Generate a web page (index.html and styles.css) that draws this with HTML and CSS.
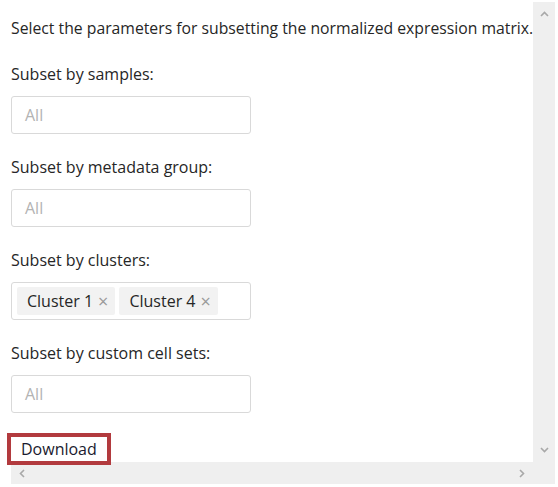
FILE: index.html
```html
<!DOCTYPE html>
<html lang="en">
<head>
    <meta charset="UTF-8">
    <meta name="viewport" content="width=device-width, initial-scale=1.0">
    <title>Subset expression matrix</title>
    <link rel="stylesheet" href="styles.css">
</head>
<body>
    <div class="frame">
        <div class="viewport">
            <p class="intro">Select the parameters for subsetting the normalized expression matrix.</p>

            <div class="field">
                <label class="field-label">Subset by samples:</label>
                <div class="select"><span class="placeholder">All</span></div>
            </div>

            <div class="field">
                <label class="field-label">Subset by metadata group:</label>
                <div class="select"><span class="placeholder">All</span></div>
            </div>

            <div class="field">
                <label class="field-label">Subset by clusters:</label>
                <div class="select has-tags">
                    <span class="tag">Cluster 1 <span class="tag-close">×</span></span>
                    <span class="tag">Cluster 4 <span class="tag-close">×</span></span>
                </div>
            </div>

            <div class="field">
                <label class="field-label">Subset by custom cell sets:</label>
                <div class="select"><span class="placeholder">All</span></div>
            </div>

            <button class="download-btn">Download</button>
        </div>

        <div class="vbar">
            <svg width="9" height="6" viewBox="0 0 9 6"><polyline points="1,5 4.5,1.5 8,5" fill="none" stroke="#a8a8a8" stroke-width="1.6"/></svg>
            <svg width="9" height="6" viewBox="0 0 9 6"><polyline points="1,1 4.5,4.5 8,1" fill="none" stroke="#a8a8a8" stroke-width="1.6"/></svg>
        </div>
        <div class="hbar">
            <svg width="6" height="9" viewBox="0 0 6 9"><polyline points="5,1 1.5,4.5 5,8" fill="none" stroke="#a8a8a8" stroke-width="1.6"/></svg>
            <svg width="6" height="9" viewBox="0 0 6 9"><polyline points="1,1 4.5,4.5 1,8" fill="none" stroke="#a8a8a8" stroke-width="1.6"/></svg>
        </div>
        <div class="corner"></div>
    </div>
</body>
</html>
```

FILE: styles.css
```css
* {
    margin: 0;
    padding: 0;
    box-sizing: border-box;
}

body {
    font-family: 'Open Sans', 'Noto Sans', sans-serif;
    font-size: 16px;
    color: #262626;
    background-color: #ffffff;
}

.frame {
    display: grid;
    grid-template-columns: 522px 22px;
    grid-template-rows: 460px 22px;
    margin: 2px 0 0 11px;
}

.viewport {
    padding-top: 15px;
    white-space: nowrap;
}

.intro {
    font-size: 15.75px;
    line-height: 22px;
    margin-bottom: 24px;
}

.field {
    margin-bottom: 22px;
}

.field-label {
    display: block;
    line-height: 23px;
    margin-bottom: 10px;
}

.select {
    display: flex;
    align-items: center;
    width: 240px;
    height: 38px;
    border: 1px solid #d9d9d9;
    border-radius: 3px;
    padding: 0 13px;
}

.placeholder {
    color: #b3b3b3;
}

.select.has-tags {
    padding: 0 5px;
    gap: 4px;
}

.tag {
    display: inline-flex;
    align-items: center;
    height: 28px;
    padding: 0 7px 0 10px;
    background-color: #f2f2f2;
    border-radius: 2px;
    color: #262626;
}

.tag-close {
    margin-left: 5px;
    color: #9a9a9a;
    font-size: 18px;
}

.download-btn {
    position: relative;
    z-index: 1;
    margin: -2px 0 0 -4px;
    height: 32px;
    padding: 0 10px;
    border: 4px solid #b23a3e;
    background-color: #ffffff;
    font-family: inherit;
    font-size: 16px;
    color: #1a1a2e;
}

.vbar {
    background-color: #efefef;
    display: flex;
    flex-direction: column;
    justify-content: space-between;
    align-items: center;
    padding: 9px 0;
}

.hbar {
    background-color: #efefef;
    display: flex;
    justify-content: space-between;
    align-items: center;
    padding: 0 8px;
}

.corner {
    background-color: #efefef;
}
```
